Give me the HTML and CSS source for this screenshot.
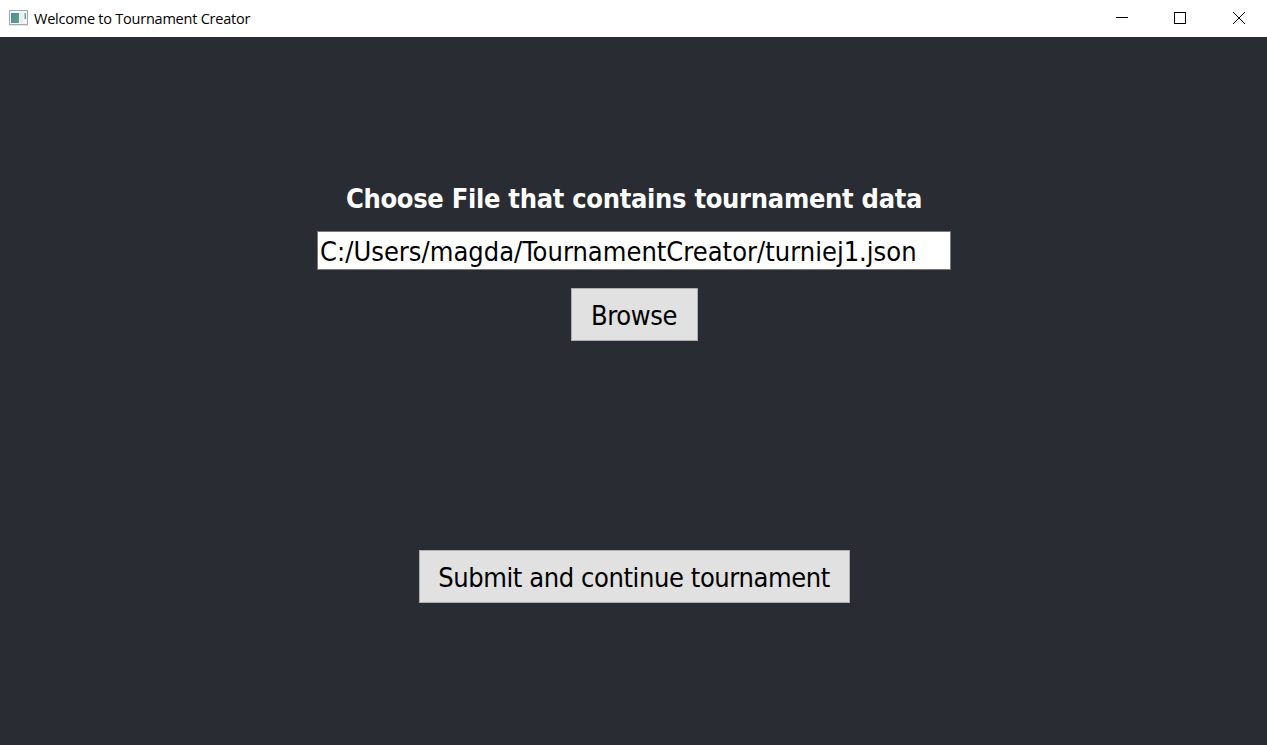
FILE: index.html
```html
<!DOCTYPE html>
<html lang="en">
<head>
<meta charset="utf-8">
<title>Welcome to Tournament Creator</title>
<link rel="stylesheet" href="styles.css">
</head>
<body>
<header class="titlebar">
  <svg class="app-icon" width="20" height="16" viewBox="0 0 20 16">
    <defs><linearGradient id="pane" x1="0" y1="0" x2="1" y2="1"><stop offset="0" stop-color="#4d86a0"/><stop offset="1" stop-color="#5fa585"/></linearGradient></defs>
    <rect x="0.5" y="0.5" width="18" height="14" fill="#f4f6f8" stroke="#a3a9ae"/>
    <path d="M0 15.5h19" stroke="#e4e6e8"/>
    <rect x="2" y="3" width="8" height="10" fill="url(#pane)"/>
    <rect x="11" y="3" width="3" height="10" fill="#e9edf1"/>
    <rect x="15.500" y="3" width="1.500" height="6" fill="#6ba68c"/>
  </svg>
  <span class="title">Welcome to Tournament Creator</span>
  <div class="controls">
    <svg width="58" height="36"><path d="M14 17.5h12" stroke="#000"/></svg>
    <svg width="58" height="36"><rect x="14.500" y="12.500" width="11" height="11" fill="none" stroke="#000"/></svg>
    <svg width="58" height="36"><path d="M15 12l12 12M27 12L15 24" stroke="#000"/></svg>
  </div>
</header>
<main class="content">
  <h1 class="heading">Choose File that contains tournament data</h1>
  <div class="field">C:/Users/magda/TournamentCreator/turniej1.json</div>
  <button class="btn browse">Browse</button>
  <button class="btn submit">Submit and continue tournament</button>
</main>
</body>
</html>
```
FILE: styles.css
```css
* { box-sizing: border-box; }
body { margin: 0; height: 745px; overflow: hidden; background: #2a2c34; font-family: "DejaVu Sans Condensed", "Noto Sans", sans-serif; }
.titlebar { height: 37px; background: #fff; display: flex; align-items: flex-start; padding-left: 9px; }
.app-icon { margin-top: 10px; }
.title { margin-left: 5px; font-family: "Open Sans", sans-serif; font-size: 14.5px; line-height: 37px; letter-spacing: -0.23px; color: #000; white-space: nowrap; }
.controls { margin-left: auto; display: flex; width: 165px; }
.controls svg { flex: none; }
.content { display: flex; flex-direction: column; align-items: center; padding-top: 142px; padding-left: 1px; }
.heading { margin: 0; height: 40px; line-height: 40px; font-size: 27px; font-weight: 700; color: #fff; white-space: nowrap; letter-spacing: -0.3px; }
.field { margin-top: 12px; width: 634px; height: 39px; background: #fff; border: 1px solid #7a7a7a; padding: 1px 0 0 2px; font-size: 27px; line-height: 37px; white-space: nowrap; letter-spacing: 0.02px; color: #000; }
.btn { height: 53px; padding: 3px 0 0; border: 1px solid #adadad; background: #e1e1e1; color: #000; font-family: inherit; font-size: 27px; line-height: 48px; letter-spacing: -0.4px; white-space: nowrap; }
.browse { width: 127px; margin-top: 18px; }
.submit { width: 431px; margin-top: 209px; }
```
